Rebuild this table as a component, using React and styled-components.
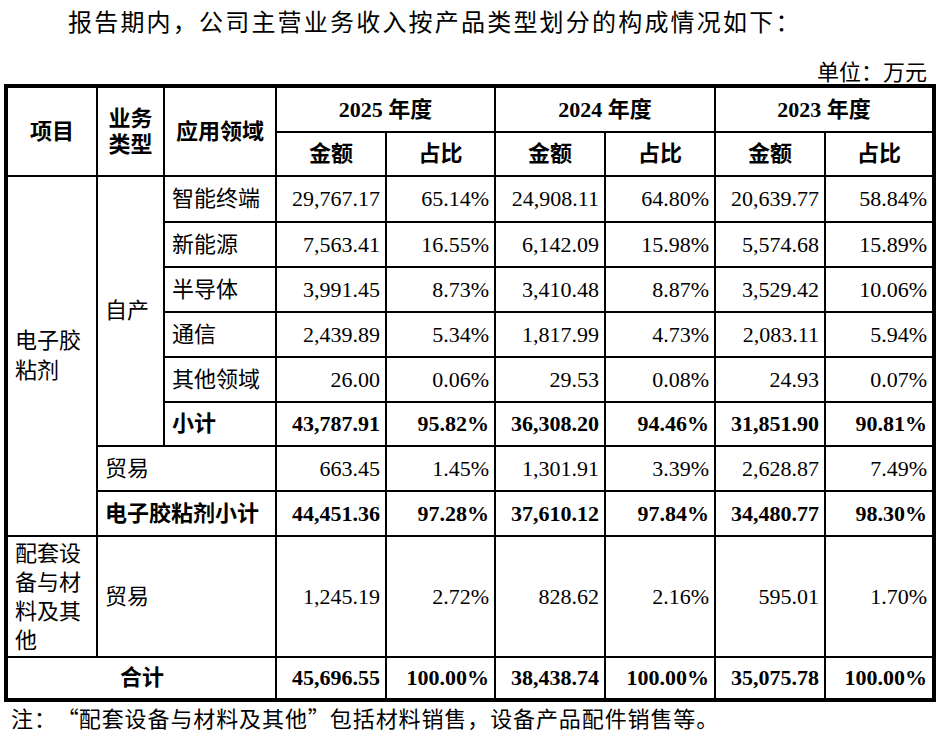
import React from "react";
import styled, { createGlobalStyle } from "styled-components";

const GlobalStyle = createGlobalStyle`
  html, body { margin: 0; padding: 0; background: #fff; }
  body { color: #000; }
  * { box-sizing: border-box; }
`;

const Page = styled.div`
  width: 938px;
  height: 732px;
  overflow: hidden;
  font-family: "Liberation Serif", "Noto Sans CJK SC", serif;
  color: #000;
`;

const Title = styled.p`
  margin: 0;
  padding-left: 68px;
  font-family: "Noto Sans CJK SC", sans-serif;
  font-size: 24px;
  line-height: 42px;
  letter-spacing: 2.2px;
  white-space: nowrap;
`;

const Unit = styled.div`
  margin-top: 14px;
  padding-right: 11px;
  text-align: right;
  font-family: "Noto Sans CJK SC", sans-serif;
  font-size: 22px;
  line-height: 28px;
`;

const Table = styled.table`
  margin-left: 4px;
  width: 932px;
  table-layout: fixed;
  border-collapse: separate;
  border-spacing: 0;
  border: 4px solid #000;
  tr:last-child > td { border-bottom: none; }
`;

const Row = styled.tr`
  height: ${(p) => p.$h}px;
`;

const Cell = styled.td`
  border-right: 2px solid #000;
  border-bottom: 2px solid #000;
  padding: 0 ${(p) => (p.$align === "right" ? "5px" : "6px")} 0 ${(p) => (p.$align === "right" ? "4px" : "7px")};
  font-size: 22px;
  line-height: ${(p) => p.$lh || 30}px;
  font-weight: ${(p) => (p.$bold ? 700 : 400)};
  text-align: ${(p) => p.$align || "left"};
  vertical-align: middle;
  white-space: ${(p) => (p.$num ? "nowrap" : "normal")};
  &:last-child { border-right: none; }
`;

const Head = styled(Cell)`
  font-weight: 700;
  text-align: center;
  line-height: 26px;
  padding: 0 4px;
`;

const Note = styled.div`
  padding-left: 11px;
  font-family: "Noto Sans CJK SC", sans-serif;
  font-size: 22px;
  line-height: 30px;
  letter-spacing: 0.9px;
  white-space: nowrap;
`;

const Quote = styled.span`
  display: inline-block;
  width: 22px;
  text-align: ${(p) => (p.$open ? "right" : "left")};
`;

const colWidths = [90, 67, 112, 110, 109, 110, 110, 110, 106];

const selfRows = [
  ["智能终端", "29,767.17", "65.14%", "24,908.11", "64.80%", "20,639.77", "58.84%"],
  ["新能源", "7,563.41", "16.55%", "6,142.09", "15.98%", "5,574.68", "15.89%"],
  ["半导体", "3,991.45", "8.73%", "3,410.48", "8.87%", "3,529.42", "10.06%"],
  ["通信", "2,439.89", "5.34%", "1,817.99", "4.73%", "2,083.11", "5.94%"],
  ["其他领域", "26.00", "0.06%", "29.53", "0.08%", "24.93", "0.07%"],
];

const subtotal = ["43,787.91", "95.82%", "36,308.20", "94.46%", "31,851.90", "90.81%"];
const trade = ["663.45", "1.45%", "1,301.91", "3.39%", "2,628.87", "7.49%"];
const glueTotal = ["44,451.36", "97.28%", "37,610.12", "97.84%", "34,480.77", "98.30%"];
const otherTrade = ["1,245.19", "2.72%", "828.62", "2.16%", "595.01", "1.70%"];
const total = ["45,696.55", "100.00%", "38,438.74", "100.00%", "35,075.78", "100.00%"];

const Nums = ({ values, bold }) =>
  values.map((v, i) => (
    <Cell key={i} $align="right" $num $bold={bold}>
      {v}
    </Cell>
  ));

export default function App() {
  return (
    <Page>
      <GlobalStyle />
      <Title>报告期内，公司主营业务收入按产品类型划分的构成情况如下：</Title>
      <Unit>单位：万元</Unit>
      <Table>
        <colgroup>
          {colWidths.map((w, i) => (
            <col key={i} style={{ width: w }} />
          ))}
        </colgroup>
        <tbody>
          <Row $h={45}>
            <Head rowSpan={2}>项目</Head>
            <Head rowSpan={2}>业务类型</Head>
            <Head rowSpan={2}>应用领域</Head>
            <Head colSpan={2}>2025 年度</Head>
            <Head colSpan={2}>2024 年度</Head>
            <Head colSpan={2}>2023 年度</Head>
          </Row>
          <Row $h={44}>
            <Head>金额</Head>
            <Head>占比</Head>
            <Head>金额</Head>
            <Head>占比</Head>
            <Head>金额</Head>
            <Head>占比</Head>
          </Row>
          {selfRows.map((r, i) => (
            <Row key={r[0]} $h={i === 0 ? 46 : 45}>
              {i === 0 && <Cell rowSpan={8}>电子胶粘剂</Cell>}
              {i === 0 && <Cell rowSpan={6}>自产</Cell>}
              <Cell>{r[0]}</Cell>
              <Nums values={r.slice(1)} />
            </Row>
          ))}
          <Row $h={44}>
            <Cell $bold>小计</Cell>
            <Nums values={subtotal} bold />
          </Row>
          <Row $h={45}>
            <Cell colSpan={2}>贸易</Cell>
            <Nums values={trade} />
          </Row>
          <Row $h={45}>
            <Cell colSpan={2} $bold>电子胶粘剂小计</Cell>
            <Nums values={glueTotal} bold />
          </Row>
          <Row $h={121}>
            <Cell $lh={29}>配套设备与材料及其他</Cell>
            <Cell colSpan={2}>贸易</Cell>
            <Nums values={otherTrade} />
          </Row>
          <Row $h={40}>
            <Cell colSpan={3} $bold $align="center">合计</Cell>
            <Nums values={total} bold />
          </Row>
        </tbody>
      </Table>
      <Note>
        注：<Quote $open>“</Quote>配套设备与材料及其他<Quote>”</Quote>包括材料销售，设备产品配件销售等。
      </Note>
    </Page>
  );
}
